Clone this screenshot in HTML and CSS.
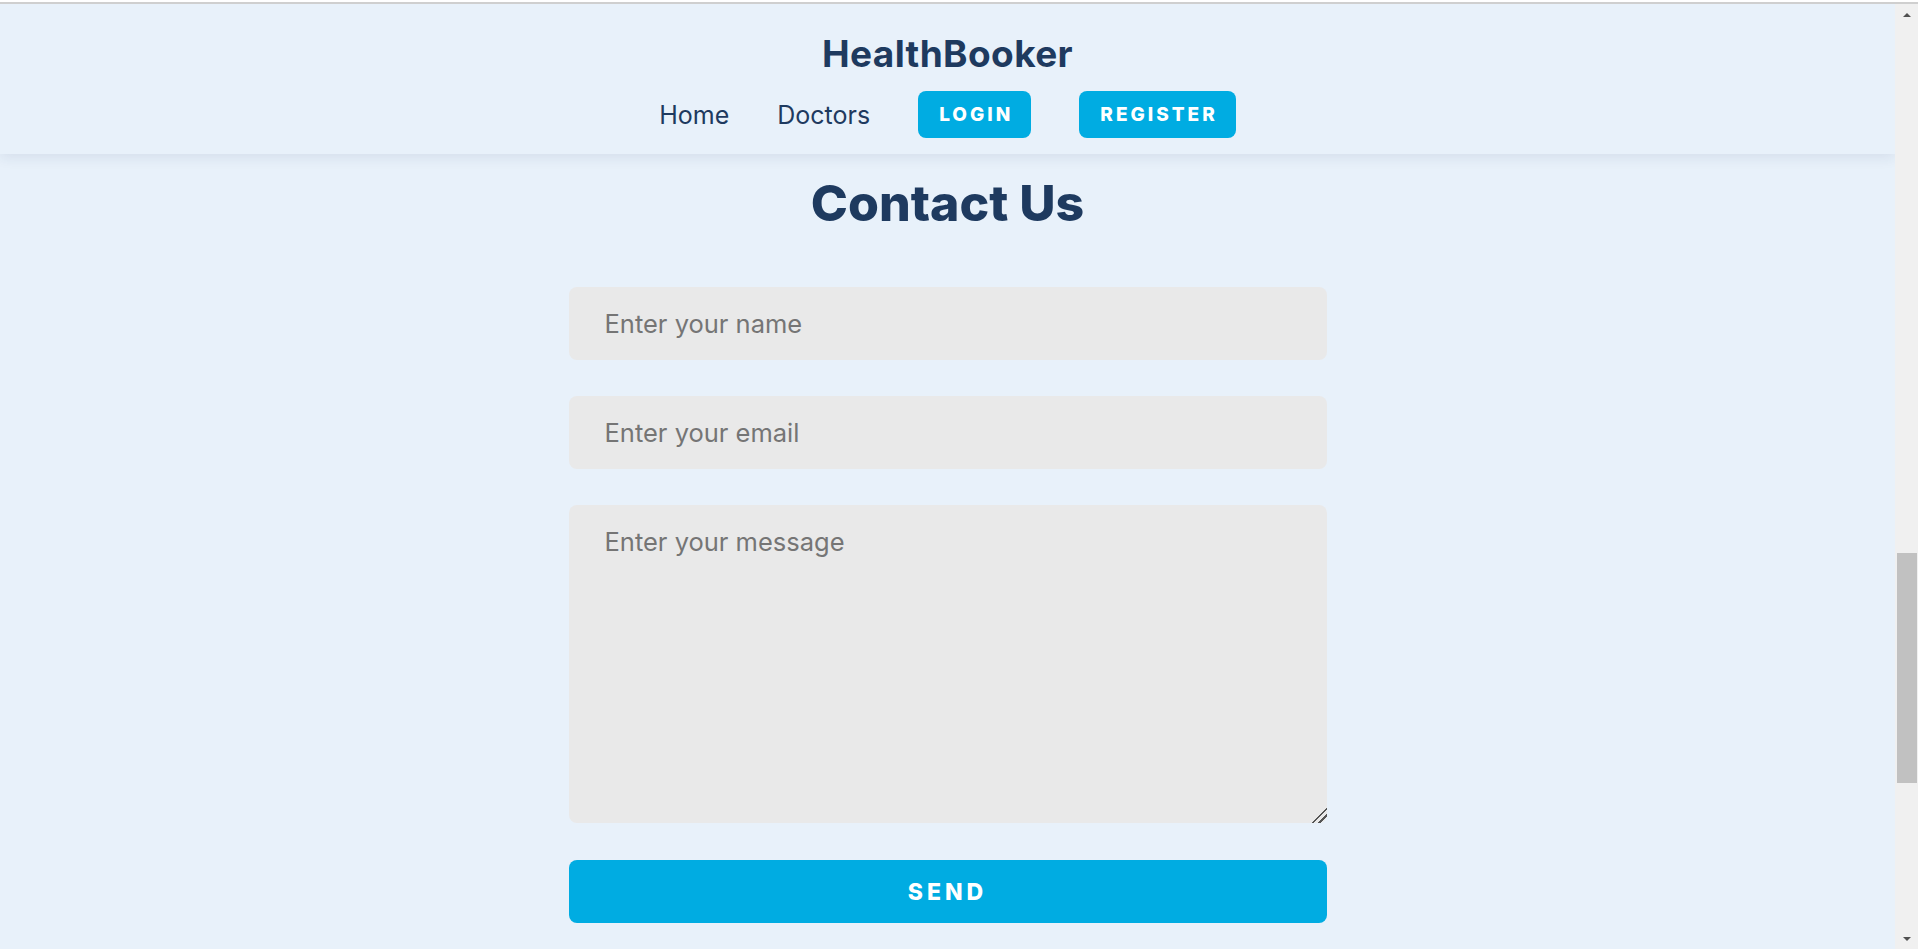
FILE: index.html
```html
<!DOCTYPE html>
<html lang="en">
<head>
<meta charset="utf-8">
<title>HealthBooker - Contact Us</title>
<link rel="stylesheet" href="styles.css">
</head>
<body>
<div class="frame-top"></div>
<div class="window">
  <div class="page">
    <header class="site-header">
      <div class="brand">HealthBooker</div>
      <nav class="nav">
        <a class="nav-link" href="#">Home</a>
        <a class="nav-link" href="#">Doctors</a>
        <a class="nav-btn" href="#">LOGIN</a>
        <a class="nav-btn" href="#">REGISTER</a>
      </nav>
    </header>
    <main class="contact">
      <h2 class="contact-title">Contact Us</h2>
      <form class="contact-form">
        <input class="field" type="text" placeholder="Enter your name">
        <input class="field" type="email" placeholder="Enter your email">
        <textarea class="field area" placeholder="Enter your message"></textarea>
        <button class="send" type="button">SEND</button>
      </form>
    </main>
  </div>
  <div class="scrollbar">
    <div class="sb-btn"><span class="arrow-up"></span></div>
    <div class="sb-track"><div class="sb-thumb"></div></div>
    <div class="sb-btn"><span class="arrow-down"></span></div>
  </div>
</div>
</body>
</html>
```
FILE: styles.css
```css
* { box-sizing: border-box; }
html, body { margin: 0; padding: 0; height: 100%; }
body {
  font-family: "Inter", "Liberation Sans", sans-serif;
  background: #ffffff;
  overflow: hidden;
  display: flex;
  flex-direction: column;
}
.frame-top {
  height: 4px;
  flex: none;
  background: #ffffff;
  border-bottom: 2px solid #cfcfcf;
}
.window {
  flex: 1;
  display: flex;
  min-height: 0;
}
.page {
  flex: 1;
  background: #e8f1fa;
  overflow: hidden;
}
.site-header {
  background: #e8f1fa;
  height: 150px;
  padding-top: 23px;
  display: flex;
  flex-direction: column;
  align-items: center;
  box-shadow: 0 4px 12px rgba(30, 58, 95, 0.09);
  position: relative;
  z-index: 1;
}
.brand {
  font-size: 37px;
  line-height: 54px;
  font-weight: 700;
  color: #1e3a5f;
  letter-spacing: 0.4px;
}
.nav {
  margin-top: 10px;
  display: flex;
  align-items: center;
  gap: 48px;
}
.nav-link {
  font-size: 25px;
  color: #1e3a5f;
  text-decoration: none;
  font-weight: 400;
}
.nav-btn {
  height: 47px;
  display: flex;
  align-items: center;
  padding: 0 18px 0 21px;
  background: #00ace2;
  color: #ffffff;
  border-radius: 8px;
  text-decoration: none;
  font-size: 19px;
  font-weight: 800;
  letter-spacing: 3px;
}
.contact {
  display: flex;
  flex-direction: column;
  align-items: center;
}
.contact-title {
  margin: 20px 0 0;
  font-size: 50px;
  line-height: 58px;
  font-weight: 800;
  color: #1e3a5f;
}
.contact-form {
  width: 40%;
  margin-top: 55px;
  display: flex;
  flex-direction: column;
  gap: 36px;
}
.field {
  display: block;
  width: 100%;
  height: 73px;
  border: none;
  border-radius: 8px;
  background: #e9e9e9;
  padding: 0 36px;
  font-family: "Inter", "Liberation Sans", sans-serif;
  font-size: 25.5px;
  color: #333;
  outline: none;
}
.field::placeholder { color: #757575; }
.area {
  height: 318px;
  padding: 21px 36px;
  resize: both;
}
.area::-webkit-resizer {
  background:
    linear-gradient(135deg,
      transparent 0 47%,
      #555555 47% 56%,
      transparent 56% 68%,
      #555555 68% 77%,
      transparent 77% 100%);
}
.send {
  margin-top: 1px;
  height: 63px;
  border: none;
  border-radius: 8px;
  background: #00ace2;
  color: #ffffff;
  font-family: "Inter", "Liberation Sans", sans-serif;
  font-size: 23px;
  font-weight: 800;
  letter-spacing: 4px;
}
.scrollbar {
  width: 23px;
  flex: none;
  background: #f0f0f0;
  display: flex;
  flex-direction: column;
}
.sb-btn {
  height: 21px;
  flex: none;
  display: flex;
  align-items: center;
  justify-content: center;
}
.arrow-up {
  width: 0; height: 0;
  border-left: 4px solid transparent;
  border-right: 4px solid transparent;
  border-bottom: 4px solid #505050;
}
.arrow-down {
  width: 0; height: 0;
  border-left: 4px solid transparent;
  border-right: 4px solid transparent;
  border-top: 4px solid #505050;
}
.sb-track {
  flex: 1;
}
.sb-thumb {
  margin: 528px 1px 0 2px;
  height: 230px;
  background: #c1c1c1;
}
```
